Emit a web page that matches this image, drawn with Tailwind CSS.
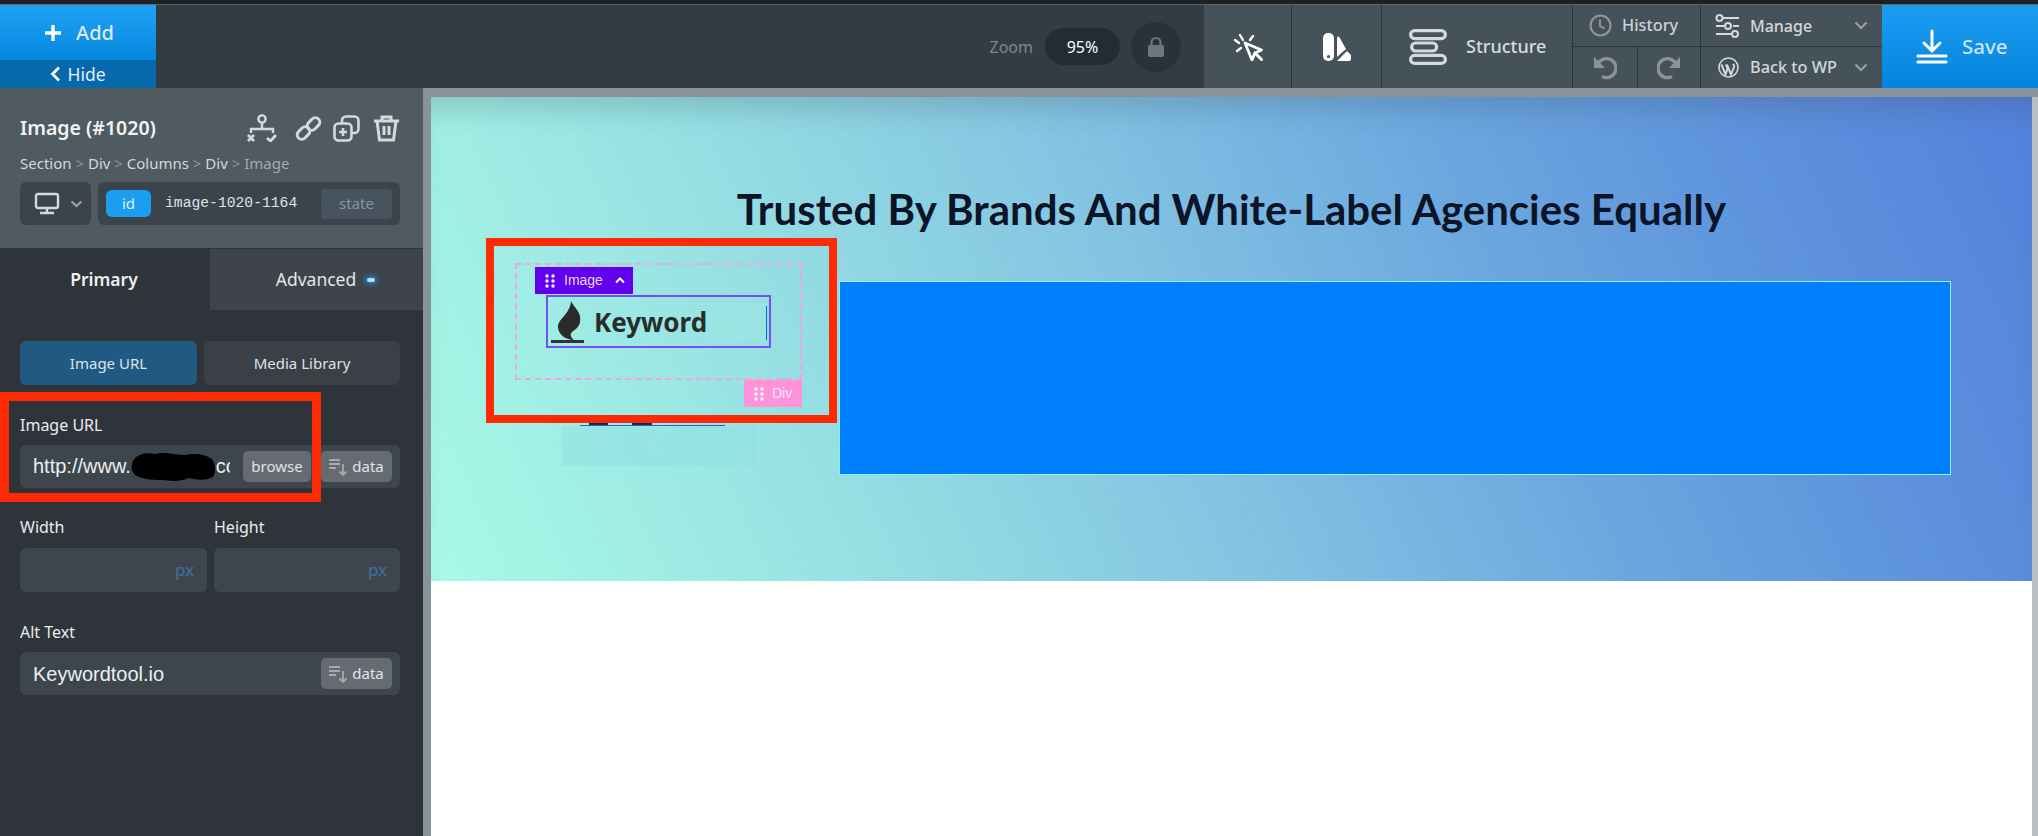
<!DOCTYPE html>
<html><head><meta charset="utf-8"><script src="https://cdn.jsdelivr.net/npm/@tailwindcss/browser@4"></script><title>Editor</title></head>
<body class="w-[2038px] h-[836px] overflow-hidden bg-white font-['Noto_Sans',sans-serif]">
<div class="relative flex flex-col w-[2038px] h-[836px] overflow-hidden">
  <div class="h-[4px] bg-[#1f2022]"></div>
  <div class="h-[1px] bg-[#5f666b]"></div>
  <!-- toolbar -->
  <header class="flex h-[83px] bg-[#343c43] text-[#dfe3e6]">
    <div class="w-[156px] flex flex-col text-white">
      <div class="h-[55px] flex items-center justify-center gap-[14px] pl-[2px] bg-gradient-to-b from-[#1ea2f4] to-[#0487de]">
        <svg width="18" height="18" viewBox="0 0 18 18"><path d="M9 1v16M1 9h16" stroke="#fff" stroke-width="3.4"/></svg>
        <span class="text-[20px] font-medium text-[#dcebf5]">Add</span>
      </div>
      <div class="h-[28px] flex items-center justify-center gap-[6px] bg-[#0669ab]">
        <svg width="11" height="16" viewBox="0 0 11 16"><path d="M9 1.500 2.500 8 9 14.500" fill="none" stroke="#fff" stroke-width="2.800"/></svg>
        <span class="text-[17.500px] text-[#e4eef5]">Hide</span>
      </div>
    </div>
    <div class="flex-1 flex items-center justify-end pr-[23px]">
      <span class="text-[16px] text-[#7f878d]">Zoom</span>
      <span class="ml-[12px] w-[75px] h-[37px] rounded-full bg-[#222c33] flex items-center justify-center text-[16px] text-white">95%</span>
      <span class="ml-[11px] w-[50px] h-[50px] rounded-full bg-[#29323a] flex items-center justify-center">
        <svg width="18" height="22" viewBox="0 0 18 22"><path d="M4.500 10V6.500a4.500 4.500 0 0 1 9 0V10" fill="none" stroke="#6f767c" stroke-width="2.200"/><rect x="1" y="9" width="16" height="12" rx="2" fill="#6f767c"/></svg>
      </span>
    </div>
    <div class="w-[88px] bg-[#46525a] flex items-center justify-center border-r border-[#2b343b]">
      <svg width="30" height="28" viewBox="0 0 30 28" fill="none" stroke="#fff" stroke-width="2.800" stroke-linecap="round" stroke-linejoin="round"><path d="M12 10l16.500 7-6.500 3-3 7z"/><path d="M22 20l6.500 6.500" stroke-width="3"/><path d="M7 2l3 5M20 3l-3 4M2 7l4 3M4 18l4-3" stroke-width="2.400"/></svg>
    </div>
    <div class="w-[90px] bg-[#46525a] flex items-center justify-center border-r border-[#2b343b]">
      <svg width="28" height="28" viewBox="0 0 28 28"><rect x="0" y="0" width="11" height="28" rx="5" fill="#fff"/><circle cx="5.500" cy="23.500" r="1.600" fill="#46525a"/><path d="M14 5c0-1.500 1.500-2 2.300-1l6.700 12-9 8z" fill="#fff"/><path d="M14 28 24 18l4 4v4a2 2 0 0 1-2 2z" fill="#fff"/></svg>
    </div>
    <div class="w-[191px] bg-[#46525a] flex items-center border-r border-[#2b343b]">
      <svg class="ml-[27px]" width="38" height="36" viewBox="0 0 38 36" fill="none" stroke="#d5d9dc" stroke-width="3.200"><rect x="1.600" y="1.600" width="34.800" height="8" rx="4"/><rect x="2.600" y="14" width="25" height="8" rx="4"/><rect x="1.600" y="26.400" width="34.800" height="8" rx="4"/></svg>
      <span class="ml-[19px] text-[18px] font-medium text-[#d7dbde]">Structure</span>
    </div>
    <div class="w-[128px] bg-[#46525a] flex flex-col border-r border-[#2b343b]">
      <div class="h-[42px] flex items-center border-b border-[#2b343b] pl-[16px] gap-[10px]">
        <svg width="23" height="23" viewBox="0 0 23 23" fill="none" stroke="#8f979c" stroke-width="2"><circle cx="11.500" cy="11.500" r="10"/><path d="M11 5.500v6.500l4.500 2.500"/></svg>
        <span class="text-[16.300px] font-medium text-[#cdd2d5]">History</span>
      </div>
      <div class="flex-1 flex">
        <div class="w-[65px] flex items-center justify-center border-r border-[#2b343b]">
          <svg width="24" height="24" viewBox="0 0 24 24"><path d="M5.500 7A9.500 9.500 0 1 1 9 20.500" fill="none" stroke="#8b9398" stroke-width="3.400"/><path d="M1 1v11h11z" fill="#8b9398"/></svg>
        </div>
        <div class="flex-1 flex items-center justify-center">
          <svg width="24" height="24" viewBox="0 0 24 24"><path d="M18.500 7A9.500 9.500 0 1 0 15 20.500" fill="none" stroke="#8b9398" stroke-width="3.400"/><path d="M23 1v11H12z" fill="#8b9398"/></svg>
        </div>
      </div>
    </div>
    <div class="w-[181px] bg-[#46525a] flex flex-col">
      <div class="h-[42px] flex items-center border-b border-[#2b343b] pl-[14px] pr-[14px]">
        <svg width="26" height="24" viewBox="0 0 26 24" fill="none" stroke="#d5d9dc" stroke-width="2"><path d="M8 4h16M1 12h9M18 12h6M1 20h15"/><circle cx="4.500" cy="4" r="3"/><circle cx="13" cy="12" r="3"/><circle cx="20" cy="20" r="3"/></svg>
        <span class="ml-[9px] flex-1 text-[16px] font-medium text-[#d4d8db]">Manage</span>
        <svg width="14" height="9" viewBox="0 0 14 9"><path d="M1.500 1.500 7 7l5.500-5.500" fill="none" stroke="#9aa1a6" stroke-width="2"/></svg>
      </div>
      <div class="flex-1 flex items-center pl-[17px] pr-[14px]">
        <svg width="21" height="21" viewBox="0 0 21 21"><circle cx="10.500" cy="10.500" r="9.500" fill="none" stroke="#d5d9dc" stroke-width="1.600"/><path d="M3.500 7.500l4 10 2-6-1.500-4M9 7.500l4 10 3-7.500c.5-1.500-.5-2.500-1-3" fill="none" stroke="#d5d9dc" stroke-width="2"/></svg>
        <span class="ml-[11px] flex-1 text-[16.300px] font-medium text-[#d4d8db]">Back to WP</span>
        <svg width="14" height="9" viewBox="0 0 14 9"><path d="M1.500 1.500 7 7l5.500-5.500" fill="none" stroke="#9aa1a6" stroke-width="2"/></svg>
      </div>
    </div>
    <div class="w-[156px] flex items-center bg-gradient-to-b from-[#1a9ef2] to-[#0484dc]">
      <svg class="ml-[34px]" width="32" height="36" viewBox="0 0 32 36" fill="none" stroke="#fff" stroke-linecap="round"><path d="M16 2v19M8 14l8 8 8-8M2 27h28M2 33h28" stroke-width="3"/></svg>
      <span class="ml-[14px] text-[20.500px] font-medium text-[#c9e4f7]">Save</span>
    </div>
  </header>
  <div class="flex flex-1 min-h-0">
    <!-- sidebar -->
    <aside class="w-[423px] flex flex-col bg-[#2f343a]">
      <div class="h-[160px] bg-[#4f5a61] px-5 pt-[26px] pr-[23px]">
        <div class="h-7 flex items-center">
          <span class="flex-1 text-[19.500px] font-semibold text-[#f1f3f4]">Image (#1020)</span>
          <svg width="30" height="28" viewBox="0 0 30 28" fill="none" stroke="#d6d9db" stroke-width="2.400"><circle cx="15" cy="5" r="3.600"/><path d="M15 9v6M4 19v-4h22v4"/><path d="M1 21l6 6M7 21l-6 6" stroke-width="2.800"/><path d="M20 24l3.500 3 5.500-6" stroke-width="2.800"/></svg>
          <svg class="ml-[18px]" width="27" height="27" viewBox="0 0 27 27" fill="none" stroke="#d6d9db" stroke-width="3"><rect x="1.500" y="13.500" width="14" height="9" rx="4.500" transform="rotate(-45 8.500 18)"/><rect x="11.500" y="4.500" width="14" height="9" rx="4.500" transform="rotate(-45 18.500 9)"/></svg>
          <svg class="ml-[11px]" width="27" height="27" viewBox="0 0 27 27" fill="none" stroke="#d6d9db" stroke-width="2.600"><rect x="9" y="1.500" width="16.500" height="16.500" rx="4"/><rect x="1.500" y="8.500" width="17" height="17" rx="4" fill="#4f5a61"/><path d="M10 13v8M6 17h8"/></svg>
          <svg class="ml-[13px]" width="27" height="27" viewBox="0 0 27 27" fill="none" stroke="#d6d9db" stroke-width="3"><path d="M1 6h25M9 6V2h9v4M4 6l2.500 19h14L23 6M11 11v9M16 11v9"/></svg>
        </div>
        <div class="h-5 mt-[11px] leading-5 text-[15px] text-[#d4d8da] whitespace-pre"><span>Section <span class="text-[#8e969b]">&gt;</span> Div <span class="text-[#8e969b]">&gt;</span> Columns <span class="text-[#8e969b]">&gt;</span> Div <span class="text-[#8e969b]">&gt;</span> <span class="text-[#a5abaf]">Image</span></span></div>
        <div class="mt-[9px] h-[43px] flex gap-[7px]">
          <div class="w-[71px] bg-[#3c444b] rounded-[6px] flex items-center pl-[14px] gap-[10px]">
            <svg width="26" height="23" viewBox="0 0 26 23" fill="none" stroke="#d6d9db" stroke-width="2.400"><rect x="2" y="2" width="22" height="14" rx="2"/><path d="M13 16v4M6 21h14"/></svg>
            <svg width="13" height="8" viewBox="0 0 13 8"><path d="M1.500 1.500 6.500 6l5-4.500" fill="none" stroke="#9aa1a6" stroke-width="2.200"/></svg>
          </div>
          <div class="flex-1 bg-[#3c444b] rounded-[6px] flex items-center pl-[8px] pr-[8px]">
            <span class="w-[45px] h-[27px] rounded-[6px] bg-[#1b9ef0] flex items-center justify-center text-[15px] text-[#dff1fc]">id</span>
            <span class="ml-[14px] flex-1 font-['Liberation_Mono',monospace] text-[14.700px] text-[#dfe2e4]">image-1020-1164</span>
            <span class="w-[71px] h-[30px] rounded-[4px] bg-[#47535f] flex items-center justify-center text-[15px] text-[#8b949b]">state</span>
          </div>
        </div>
      </div>
      <div class="h-[62px] flex pt-[1px]">
        <div class="w-[210px] flex items-center justify-center pr-[2px] text-[17.500px] font-semibold text-[#eef0f1]">Primary</div>
        <div class="flex-1 bg-[#3e444a] flex items-center justify-center gap-[11px] pl-[18px] text-[17.500px] text-[#e3e6e8]">Advanced<span class="w-[8px] h-[4px] rounded-[2px] bg-[#b9dcf6] shadow-[0_0_5px_2px_#2a83c9]"></span></div>
      </div>
      <div class="px-5 pr-[23px] pt-[31px] text-[#e9ebec]">
        <div class="flex gap-[7px] h-[44px] text-[15px]">
          <div class="w-[177px] rounded-[6px] bg-[#205a82] flex items-center justify-center text-[#d9e4ec]">Image URL</div>
          <div class="flex-1 rounded-[6px] bg-[#3b4046] flex items-center justify-center text-[#dfe2e4]">Media Library</div>
        </div>
        <div class="h-5 mt-[30px] flex items-center text-[16px]">Image URL</div>
        <div class="mt-[10px] h-[43px] rounded-[6px] bg-[#3e464d] flex items-center pl-[13px] pr-[8px] font-['Liberation_Sans',sans-serif] text-[20px] text-[#eceeef]">
          <span class="w-[197px] overflow-hidden whitespace-nowrap">http://www.<svg class="inline-block align-middle -mt-[2px]" width="85" height="31" viewBox="0 0 85 31"><path d="M2 10C6 3 14 1 24 3c10-3 20 1 30 1 10-2 20-1 27 4 4 6 4 14 1 18-8 4-16 3-24 1-10 4-18 3-27 2C20 29 10 28 4 24 0 20 0 15 2 10z" fill="#000"/></svg>com</span>
          <span class="ml-[13px] w-[68px] h-[31px] rounded-[5px] bg-[#666b71] flex items-center justify-center font-['Noto_Sans',sans-serif] text-[15px] text-[#e1e3e5]">browse</span>
          <span class="ml-[10px] w-[71px] h-[31px] rounded-[5px] bg-[#666b71] flex items-center justify-center gap-[5px] font-['Noto_Sans',sans-serif] text-[15px] text-[#e1e3e5]">
            <svg width="18" height="18" viewBox="0 0 18 18" fill="none" stroke="#a6aaae" stroke-width="1.800"><path d="M0 2h11M0 6h11M0 10h7M14 6v11M10.500 13.500 14 17l3.500-3.500"/></svg>data</span>
        </div>
        <div class="mt-[29px] h-5 flex gap-[7px] text-[16px] leading-5"><span class="w-[187px]">Width</span><span>Height</span></div>
        <div class="mt-[11px] h-[44px] flex gap-[7px]">
          <div class="w-[187px] rounded-[6px] bg-[#3e464d] flex items-center justify-end pr-[13px] text-[17px] text-[#3e70a3]">px</div>
          <div class="flex-1 rounded-[6px] bg-[#3e464d] flex items-center justify-end pr-[13px] text-[17px] text-[#3e70a3]">px</div>
        </div>
        <div class="mt-[30px] h-5 flex items-center text-[16px]">Alt Text</div>
        <div class="mt-[10px] h-[43px] rounded-[6px] bg-[#3e464d] flex items-center justify-between pl-[13px] pr-[8px] font-['Liberation_Sans',sans-serif] text-[20px] text-[#eceeef]">
          <span>Keywordtool.io</span>
          <span class="w-[71px] h-[31px] rounded-[5px] bg-[#666b71] flex items-center justify-center gap-[5px] font-['Noto_Sans',sans-serif] text-[15px] text-[#e1e3e5]">
            <svg width="18" height="18" viewBox="0 0 18 18" fill="none" stroke="#a6aaae" stroke-width="1.800"><path d="M0 2h11M0 6h11M0 10h7M14 6v11M10.500 13.500 14 17l3.500-3.500"/></svg>data</span>
        </div>
      </div>
    </aside>
    <div class="w-[8px] bg-[#87929a]"></div>
    <!-- canvas -->
    <main class="flex-1 flex flex-col">
      <div class="h-[9px] bg-[#87929a]"></div>
      <div class="flex flex-1 min-h-0">
        <div class="flex-1 flex flex-col bg-white">
          <section class="h-[484px] bg-[linear-gradient(66deg,#a8fae6_0%,#98e3e3_22%,#85c6e2_44%,#6aa6df_67%,#5c90dc_85%,#5282dc_100%)] shadow-[inset_0_26px_24px_-12px_rgba(60,70,80,0.2)] pt-[88px]">
            <h1 class="h-[48px] leading-[48px] text-center font-['Lato',sans-serif] font-bold text-[42px] text-[#0c1428] whitespace-nowrap">Trusted By Brands And White-Label Agencies Equally</h1>
            <div class="flex mt-[30px] pl-[84px]">
              <div class="w-[287px]">
                <div class="relative h-[117px] border-2 border-dashed border-[#f0a6dc] pt-[30px] pl-[29px]">
                  <div class="absolute left-[18px] top-[2px] w-[98px] h-[27px] bg-[#6200ee] flex items-center text-white text-[14px] font-['Liberation_Sans',sans-serif] pl-[10px]">
                    <svg width="10" height="14" viewBox="0 0 10 14" fill="#fff"><circle cx="2" cy="2" r="1.700"/><circle cx="8" cy="2" r="1.700"/><circle cx="2" cy="7" r="1.700"/><circle cx="8" cy="7" r="1.700"/><circle cx="2" cy="12" r="1.700"/><circle cx="8" cy="12" r="1.700"/></svg>
                    <span class="ml-[9px] text-[#e6d6ff]">Image</span>
                    <svg class="ml-[12px]" width="10" height="7" viewBox="0 0 10 7"><path d="M1 5.500 5 1.500l4 4" fill="none" stroke="#fff" stroke-width="2"/></svg>
                  </div>
                  <div class="relative w-[225px] h-[53px] border-2 border-[#7450f0] flex items-center">
                    <svg class="ml-[1px] shrink-0" width="36" height="46" viewBox="0 0 36 46"><path d="M22 2c3 7 11 11 9 21-1 6-6 8-9 11-1 2 0 5 3 7-8 0-15-5-16-12C8 20 21 16 22 2z" fill="#2b2b2b"/><rect x="2" y="41" width="33" height="3" fill="#333"/></svg>
                    <span class="ml-[9px] font-bold text-[26px] text-[#2a2c2c] leading-none">Keyword</span>
                    <span class="absolute right-[2px] top-[6px] w-[56px] h-[38px] bg-[#9ee6e2]/60"></span>
                    <span class="absolute right-[2px] top-[9px] w-[1px] h-[34px] bg-[#0a63e0]"></span>
                  </div>
                  <div class="absolute right-[-2px] bottom-[-29px] w-[58px] h-[27px] bg-[#ff93d9] flex items-center pl-[10px] text-[14px] font-['Liberation_Sans',sans-serif] text-[#fde3f5]">
                    <svg width="10" height="14" viewBox="0 0 10 14" fill="#fff"><circle cx="2" cy="2" r="1.700"/><circle cx="8" cy="2" r="1.700"/><circle cx="2" cy="7" r="1.700"/><circle cx="8" cy="7" r="1.700"/><circle cx="2" cy="12" r="1.700"/><circle cx="8" cy="12" r="1.700"/></svg>
                    <span class="ml-[8px]">Div</span>
                  </div>
                </div>
                <div class="relative ml-[47px] mt-[46px] w-[194px] h-[40px] bg-[#8fe0e2]/50 flex items-center justify-center">
                  <span class="absolute left-[18px] -top-[1px] w-[145px] h-[1px] bg-[#1a63dc]"></span>
                  <span class="absolute left-[27px] -top-[11px] w-[19px] h-[10px] bg-[#1d2a33]"></span>
                  <span class="absolute left-[70px] -top-[11px] w-[20px] h-[10px] bg-[#1d2a33]"></span>
                  <svg width="20" height="20" viewBox="0 0 20 20"><circle cx="10" cy="10" r="7" fill="none" stroke="#7ff5ee" stroke-width="2" stroke-dasharray="1 2"/><circle cx="10" cy="10" r="3" fill="none" stroke="#7ff5ee" stroke-width="1" stroke-dasharray="1 2"/></svg>
                </div>
              </div>
              <div class="ml-[37px] mt-[18px] w-[1112px] h-[194px] bg-[#007fff] border border-[#8ff2ff]"></div>
            </div>
          </section>
        </div>
        <div class="w-[6px] bg-[#b9bec2]"></div>
      </div>
    </main>
  </div>
  <!-- annotation boxes lying over the page -->
  <div class="absolute left-0 top-[392px] w-[321px] h-[110px] border-[9px] border-[#fe2a06]"></div>
  <div class="absolute left-[486px] top-[238px] w-[351px] h-[185px] border-[8px] border-[#fe2a06]"></div>
</div>
</body></html>
